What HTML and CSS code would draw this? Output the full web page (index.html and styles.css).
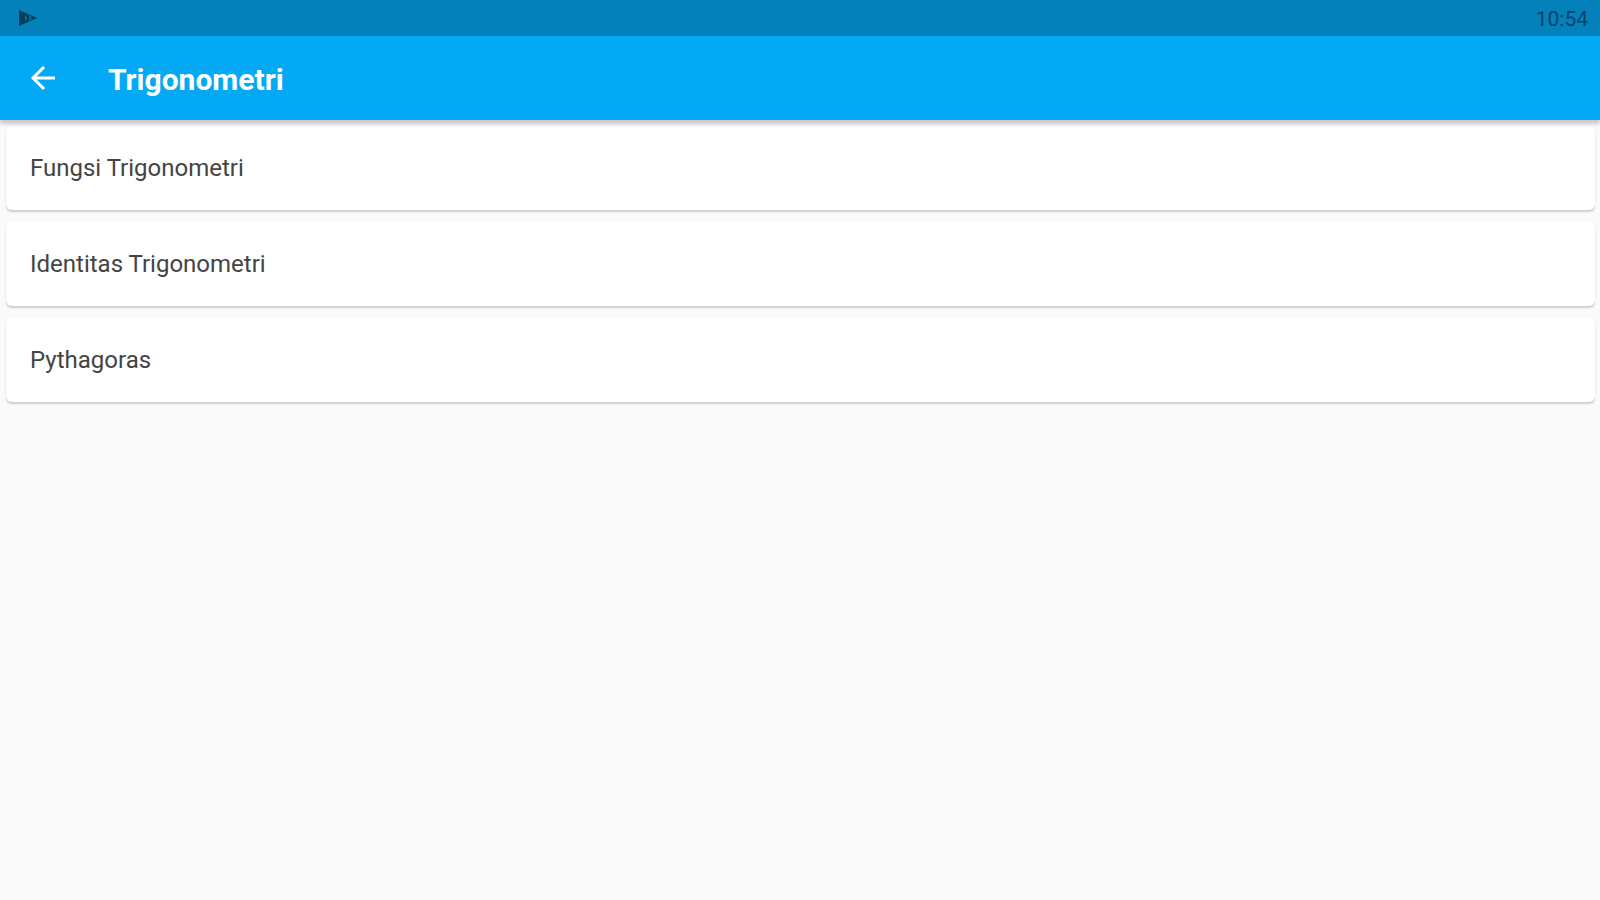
FILE: index.html
```
<!DOCTYPE html>
<html lang="id">
<head>
    <meta charset="UTF-8" />
    <meta name="viewport" content="width=device-width, initial-scale=1" />
    <title>Trigonometri</title>
    <link rel="stylesheet" href="styles.css">
</head>
<body>
    <div class="status-bar">
        <svg class="status-icon" viewBox="0 0 20 18" aria-hidden="true">
            <path d="M1 1 L19 9 L1 17 Z" fill="#033e5b" />
            <path d="M7 6 L9 9 L7 12 Z M10 6 L14 8 L12 9 Z M10 12 L14 10 L12 9 Z" fill="#0480ba" />
        </svg>
        <time class="clock">10:54</time>
    </div>

    <header class="toolbar">
        <button class="back" type="button" aria-label="Kembali">
            <svg viewBox="0 0 26 26" aria-hidden="true">
                <path d="M14 2 L3 13 L14 24 M3 13 H25" fill="none" stroke="#fff" stroke-width="3" />
            </svg>
        </button>
        <h1>Trigonometri</h1>
    </header>

    <main class="list">
        <a class="card" href="#fungsi">Fungsi Trigonometri</a>
        <a class="card" href="#identitas">Identitas Trigonometri</a>
        <a class="card" href="#pythagoras">Pythagoras</a>
    </main>
</body>
</html>
```
FILE: styles.css
```
body {
    margin: 0;
    font-family: Roboto, sans-serif;
    background-color: #fafafa;
    color: #444;
}
.status-bar {
    display: flex;
    align-items: center;
    justify-content: space-between;
    height: 36px;
    padding: 0 12px 0 18px;
    background-color: #0480ba;
}
.status-icon {
    width: 20px;
    height: 18px;
}
.clock {
    font-size: 21px;
    line-height: 24px;
    padding-top: 2px;
    color: #034467;
}
.toolbar {
    position: relative;
    display: flex;
    align-items: center;
    gap: 52px;
    height: 84px;
    padding: 0 30px;
    background-color: #03a9f4;
    box-shadow: 0 4px 4px rgba(0, 0, 0, 0.2);
}
.toolbar h1 {
    margin: 0;
    padding-top: 2px;
    font-size: 30px;
    font-weight: 700;
    color: #fff;
}
.back {
    padding: 0;
    border: 0;
    background: none;
    cursor: pointer;
}
.back svg {
    display: block;
    width: 26px;
    height: 26px;
}
.list {
    display: flex;
    flex-direction: column;
    gap: 12px;
    padding: 6px 5px 6px 6px;
}
.card {
    padding: 24px;
    border-radius: 6px;
    background-color: #fff;
    box-shadow: 0 2px 2px rgba(0, 0, 0, 0.18);
    font-size: 24px;
    line-height: 36px;
    color: inherit;
    text-decoration: none;
}
```
